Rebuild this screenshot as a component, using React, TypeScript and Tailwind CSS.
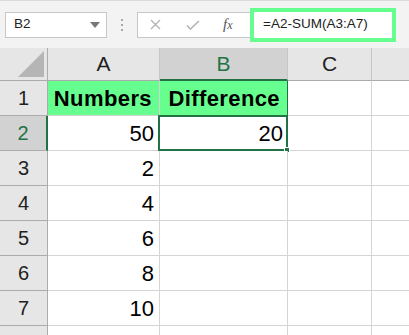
import React from 'react';

const font = { fontFamily: '"Liberation Sans", Arial, sans-serif' };

const rows: { n: number; a: string; b: string; head?: boolean }[] = [
  { n: 1, a: 'Numbers', b: 'Difference', head: true },
  { n: 2, a: '50', b: '20' },
  { n: 3, a: '2', b: '' },
  { n: 4, a: '4', b: '' },
  { n: 5, a: '6', b: '' },
  { n: 6, a: '8', b: '' },
  { n: 7, a: '10', b: '' },
];

const Toolbar: React.FC = () => (
  <div className="h-[48px] bg-[#f3f3f3] border-t border-[#dadada] flex items-center">
    {/* Name box */}
    <div className="ml-[5px] w-[102px] h-[26px] bg-white border border-[#c6c6c6] flex items-center justify-between pl-[8px] pr-[6px]">
      <span className="text-[13.5px] text-[#222]">B2</span>
      <svg width="10" height="6" viewBox="0 0 10 6"><path d="M0 0h10L5 6z" fill="#777" /></svg>
    </div>
    <div className="w-[30px] flex flex-col items-center gap-[3px]">
      <span className="w-[2px] h-[2px] bg-[#a8a8a8]" />
      <span className="w-[2px] h-[2px] bg-[#a8a8a8]" />
      <span className="w-[2px] h-[2px] bg-[#a8a8a8]" />
    </div>
    {/* Cancel / enter / fx */}
    <div className="w-[113px] h-[26px] bg-white border border-[#c6c6c6] border-r-0 flex items-center">
      <svg className="ml-[12px]" width="11" height="11" viewBox="0 0 11 11">
        <path d="M1 1l9 9M10 1l-9 9" stroke="#b4b4b4" strokeWidth="1.4" />
      </svg>
      <svg className="ml-[25px]" width="14" height="10" viewBox="0 0 14 10">
        <path d="M1 5.5l3.5 3.5L13 1" stroke="#b4b4b4" strokeWidth="1.6" fill="none" />
      </svg>
      <span className="ml-[23px] text-[15px] italic text-[#555]" style={{ fontFamily: '"Liberation Serif", serif' }}>
        f<span className="text-[12px]">x</span>
      </span>
    </div>
    {/* Formula input (highlighted) */}
    <div className="w-[146px] h-[34px] border-4 border-[#66ff8f] bg-white flex items-center pl-[9px]">
      <span className="text-[13.5px] text-[#222]">=A2-SUM(A3:A7)</span>
    </div>
  </div>
);

const Grid: React.FC = () => (
  <div className="grid grid-cols-[48px_112px_128px_84px_1fr]">
    {/* Column headers */}
    <div className="h-[33px] bg-[#e6e6e6] border-r border-b border-[#ababab] flex items-end justify-end pr-[3px] pb-[3px]">
      <svg width="26" height="26" viewBox="0 0 26 26"><path d="M26 0v26H0z" fill="#b5b5b5" /></svg>
    </div>
    <div className="h-[33px] bg-[#e6e6e6] border-r border-b border-r-[#c6c6c6] border-b-[#ababab] flex items-center justify-center text-[21px] text-[#222]">A</div>
    <div className="h-[33px] bg-[#d2d2d2] border-r border-b-2 border-r-[#c6c6c6] border-b-[#217346] flex items-center justify-center text-[21px] text-[#217346]">B</div>
    <div className="h-[33px] bg-[#e6e6e6] border-r border-b border-r-[#c6c6c6] border-b-[#ababab] flex items-center justify-center text-[21px] text-[#222]">C</div>
    <div className="h-[33px] bg-[#e6e6e6] border-b border-[#ababab]" />

    {rows.map((r) => {
      const sel = r.n === 2;
      return (
        <React.Fragment key={r.n}>
          <div
            className={`h-[35px] border-b flex items-center justify-center text-[20px] ${
              sel
                ? 'bg-[#d2d2d2] text-[#217346] border-r-2 border-r-[#217346] border-b-[#ababab]'
                : 'bg-[#e6e6e6] text-[#222] border-r border-[#ababab]'
            }`}
          >
            {r.n}
          </div>
          <div
            className={`h-[35px] border-r border-b border-[#d4d4d4] flex items-center justify-end text-black ${
              r.head ? 'bg-[#66ff8f] font-bold text-[22px] tracking-[0.4px] pr-[7px]' : 'bg-white text-[22px] pr-[5px]'
            }`}
          >
            {r.a}
          </div>
          <div
            className={`relative h-[35px] border-r border-b flex items-center justify-end text-black ${
              r.head
                ? 'bg-[#66ff8f] font-bold text-[22px] tracking-[0.4px] pr-[7px] border-[#217346]'
                : 'bg-white text-[22px] pr-[4px] border-[#d4d4d4]'
            }`}
          >
            {r.b}
            {sel && (
              <div className="absolute -left-[2px] -top-[1px] -right-[1px] -bottom-[1px] border-2 border-[#217346]">
                <div className="absolute -right-[4px] -bottom-[4px] w-[6px] h-[6px] bg-[#217346] border border-white" />
              </div>
            )}
          </div>
          <div className="h-[35px] border-r border-b border-[#d4d4d4] bg-white" />
          <div className="h-[35px] border-b border-[#d4d4d4] bg-white" />
        </React.Fragment>
      );
    })}
    <div className="h-[35px] bg-[#e6e6e6] border-r border-[#ababab]" />
    <div className="h-[35px] border-r border-[#d4d4d4] bg-white" />
    <div className="h-[35px] border-r border-[#d4d4d4] bg-white" />
    <div className="h-[35px] border-r border-[#d4d4d4] bg-white" />
    <div className="h-[35px] bg-white" />
  </div>
);

export default function App() {
  return (
    <div className="w-[409px] h-[335px] overflow-hidden bg-white" style={font}>
      <Toolbar />
      <Grid />
    </div>
  );
}
